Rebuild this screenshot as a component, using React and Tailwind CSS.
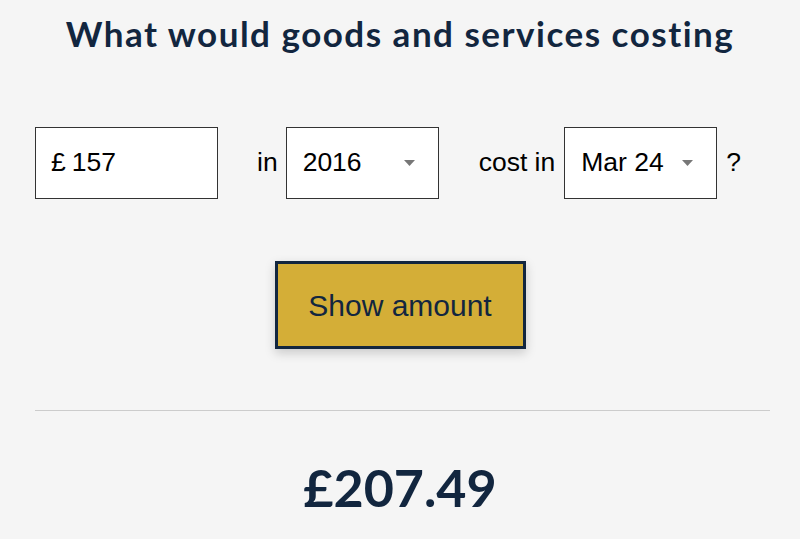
import React, { useState } from "react";

const arial = { fontFamily: '"Liberation Sans", Arial, sans-serif' };

function Caret() {
  return (
    <svg width="11" height="6" viewBox="0 0 11 6" className="shrink-0">
      <path d="M0 0h11L5.5 6z" fill="#777" />
    </svg>
  );
}

function SelectBox({ value }) {
  return (
    <div className="w-[153px] h-[72px] border border-[#333] bg-white flex items-center justify-between pl-4 pr-[23px]">
      <span className="text-black">{value}</span>
      <Caret />
    </div>
  );
}

export default function App() {
  const [amount] = useState("157");

  return (
    <div
      className="min-h-screen bg-[#f5f5f5] flex flex-col items-center text-[#12263f]"
      style={arial}
    >
      <h1
        className="mt-[12px] text-[35px] font-bold leading-[42px] tracking-[1.5px]"
        style={{ fontFamily: 'Lato, "Noto Sans", sans-serif' }}
      >
        What would goods and services costing
      </h1>

      {/* inputs row */}
      <div className="mt-[73px] w-full px-[35px] flex items-center text-[26.5px] text-black">
        <div className="w-[183px] h-[72px] border border-[#333] bg-white flex items-center pl-[15px]">
          <span>£</span>
          <span className="ml-[6px]">{amount}</span>
        </div>
        <span className="ml-[39px] mr-[8px]">in</span>
        <SelectBox value="2016" />
        <span className="ml-[40px] mr-[9px]">cost in</span>
        <SelectBox value="Mar 24" />
        <span className="ml-[9px]">?</span>
      </div>

      <button className="mt-[62px] w-[251px] h-[88px] border-[3px] border-[#12263f] bg-[#d4ae37] text-[30px] text-[#12263f] shadow-[0_4px_10px_rgba(0,0,0,0.18)]">
        Show amount
      </button>

      <div className="mt-[61px] self-start ml-[35px] w-[735px] h-px bg-[#ccc]" />

      <div
        className="mt-[50px] text-[52px] font-bold leading-none"
        style={{ fontFamily: 'Lato, "Noto Sans", sans-serif' }}
      >
        £207.49
      </div>
    </div>
  );
}
